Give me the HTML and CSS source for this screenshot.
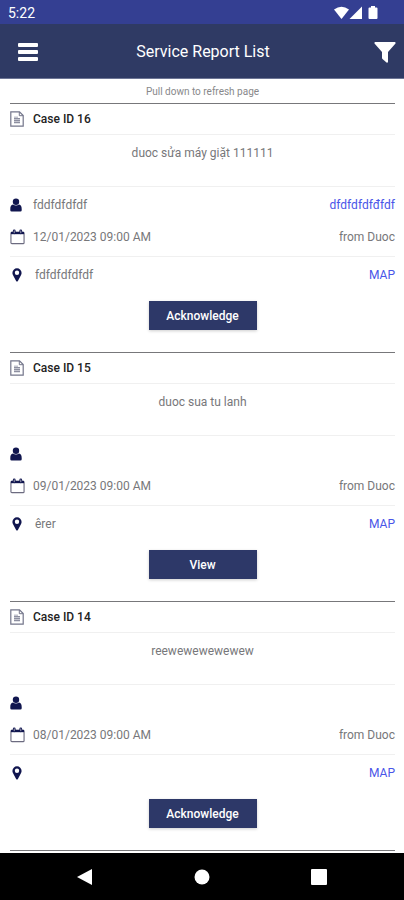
FILE: index.html
```html
<!DOCTYPE html>
<html lang="en">
<head>
<meta charset="utf-8">
<meta name="viewport" content="width=device-width, initial-scale=1">
<title>Service Report List</title>
<link rel="stylesheet" href="styles.css">
</head>
<body>
<svg class="sprite" aria-hidden="true">
  <symbol id="doc" viewBox="0 0 14 16"><path d="M.8.8h8.700l3.700 3.700v10.700H.8z" fill="#fff" stroke="#73758a" stroke-width="1.200"/><path d="M9.300 1v3.700H13" fill="none" stroke="#73758a"/><path d="M4 5.500h4v1.500h2v5.500H4z" fill="#c4c5cf"/><path d="M4 7.500h6M4 9.500h6M4 11.500h6" stroke="#8d8fa0"/></symbol>
  <symbol id="person" viewBox="0 0 12 14"><circle cx="6" cy="3.700" r="3.200"/><path d="M3 6.500C1 7 .3 8.500.3 11v1.200q0 1.300 1.300 1.300h8.800q1.300 0 1.300-1.300V11c0-2.500-.7-4-2.700-4.500q-3 2.200-6 0z"/></symbol>
  <symbol id="calendar" viewBox="0 0 16 16"><rect x="1" y="3" width="14" height="12" rx="1" fill="#fff" stroke="#6c6b80" stroke-width="1.200"/><path d="M1 2.500h14V5H1z"/><path d="M4.500 1.500v2M11.500 1.500v2" stroke="#11164f" stroke-width="3" stroke-linecap="round"/><path d="M4.500 1.500v2M11.500 1.500v2" stroke="#aaaabd" stroke-linecap="round"/></symbol>
  <symbol id="pin" viewBox="0 0 10 14"><path fill-rule="evenodd" d="M5 .3A4.600 4.600 0 0 0 .4 4.900c0 1 .3 1.700.8 2.600L4.100 13q.9 1 1.800 0l2.900-5.500c.5-.9.8-1.600.8-2.600A4.600 4.600 0 0 0 5 .3zm0 2.300a2.200 2.200 0 1 1 0 4.400 2.200 2.200 0 0 1 0-4.400z"/></symbol>
</svg>
<div class="status">
  <span>5:22</span>
  <svg width="46" height="14" viewBox="0 0 46 14" fill="#fff" aria-hidden="true"><path d="M0 3.500Q7.500-2 15 3.500L7.500 13z"/><path d="M28 .5V13H15.500z"/><path d="M37 0h4v1.500h1.500q1 0 1 1V12q0 1-1 1h-7q-1 0-1-1V2.500q0-1 1-1H37z"/></svg>
</div>
<header class="bar">
  <button class="icon-button" aria-label="Menu"><svg width="20" height="18" viewBox="0 0 20 18" fill="#fff"><rect y="0" width="20" height="4" rx="1"/><rect y="7" width="20" height="4" rx="1"/><rect y="14" width="20" height="4" rx="1"/></svg></button>
  <h1>Service Report List</h1>
  <button class="icon-button" aria-label="Filter"><svg width="22" height="21" viewBox="0 0 22 21" fill="#fff"><path d="M1 0h20q1 .5.500 1.500L14 10v10q-.5 1-1.500.5L8.500 17q-.5-.5-.5-1v-6L.5 1.500Q0 .5 1 0z"/></svg></button>
</header>
<main>
  <p class="hint">Pull down to refresh page</p>
  <article class="card">
    <h2><svg class="doc"><use href="#doc"/></svg>Case ID 16</h2>
    <p class="message">duoc sửa máy giặt 111111</p>
    <div class="details">
      <div class="row"><svg class="person"><use href="#person"/></svg><span>fddfdfdfdf</span><a href="#contact">dfdfdfdfđfdf</a></div>
      <div class="row"><svg class="calendar"><use href="#calendar"/></svg><span>12/01/2023 09:00 AM</span><span class="from">from Duoc</span></div>
    </div>
    <div class="row place"><svg class="pin"><use href="#pin"/></svg><span>fdfdfdfdfdf</span><a href="#map">MAP</a></div>
    <button class="action">Acknowledge</button>
  </article>
  <article class="card">
    <h2><svg class="doc"><use href="#doc"/></svg>Case ID 15</h2>
    <p class="message">duoc sua tu lanh</p>
    <div class="details">
      <div class="row"><svg class="person"><use href="#person"/></svg></div>
      <div class="row"><svg class="calendar"><use href="#calendar"/></svg><span>09/01/2023 09:00 AM</span><span class="from">from Duoc</span></div>
    </div>
    <div class="row place"><svg class="pin"><use href="#pin"/></svg><span>êrer</span><a href="#map">MAP</a></div>
    <button class="action">View</button>
  </article>
  <article class="card">
    <h2><svg class="doc"><use href="#doc"/></svg>Case ID 14</h2>
    <p class="message">reewewewewewew</p>
    <div class="details">
      <div class="row"><svg class="person"><use href="#person"/></svg></div>
      <div class="row"><svg class="calendar"><use href="#calendar"/></svg><span>08/01/2023 09:00 AM</span><span class="from">from Duoc</span></div>
    </div>
    <div class="row place"><svg class="pin"><use href="#pin"/></svg><a href="#map">MAP</a></div>
    <button class="action">Acknowledge</button>
  </article>
</main>
<nav class="system" aria-label="System">
  <button aria-label="Back"><svg width="16" height="16" viewBox="0 0 16 16"><path d="M15 0v16L0 8z"/></svg></button>
  <button aria-label="Home"><svg width="16" height="16" viewBox="0 0 16 16"><circle cx="8" cy="8" r="7.500"/></svg></button>
  <button aria-label="Recent apps"><svg width="16" height="16" viewBox="0 0 16 16"><rect width="16" height="16" rx="1"/></svg></button>
</nav>
</body>
</html>
```
FILE: styles.css
```css
* { box-sizing: border-box; }

body {
  margin: 0;
  min-height: 100vh;
  display: flex;
  flex-direction: column;
  background: #fff;
  color: #77777a;
  font: 12px/18px Roboto, sans-serif;
}

h1, h2, p { margin: 0; }
a { color: #4a55e8; text-decoration: none; }
button { border: 0; padding: 0; background: none; font: inherit; }
svg { display: block; flex: none; }
.sprite { position: absolute; width: 0; height: 0; }

.status {
  display: flex;
  justify-content: space-between;
  align-items: center;
  height: 24px;
  padding: 2px 24px 0 8px;
  background: #343f92;
  color: #fff;
  font-size: 14px;
}

.bar {
  display: flex;
  justify-content: space-between;
  align-items: center;
  height: 55px;
  padding: 2px 8px 0 18px;
  background: #2f3a64;
  border-bottom: 1px solid #6d7595;
  color: #fff;
}
.bar h1 {
  flex: 1;
  padding-right: 6px;
  text-align: center;
  font-size: 16px;
  line-height: 18px;
  font-weight: 400;
}
.icon-button { display: flex; }

main { flex: 1; padding: 0 9px 0 10px; }

.hint {
  height: 24px;
  line-height: 25px;
  text-align: center;
  font-size: 10px;
  color: #88888a;
}

.card {
  display: flex;
  flex-direction: column;
  height: 249px;
  border-top: 1px solid #77777a;
}
.card:last-child { border-bottom: 1px solid #77777a; height: 250px; }

.card h2 {
  display: flex;
  align-items: center;
  height: 31px;
  border-bottom: 1px solid #f0f0f0;
  color: #222;
  font-size: 12px;
  font-weight: 500;
}

.message {
  height: 52px;
  padding-top: 9px;
  border-bottom: 1px solid #f0f0f0;
  text-align: center;
}

.details { padding: 2px 0 3px; border-bottom: 1px solid #f0f0f0; }
.row { display: flex; align-items: center; height: 32px; }
.row a, .from { margin-left: auto; }
.place { height: 36px; }

.card svg { fill: #11164f; }
.doc { width: 14px; height: 16px; margin-right: 9px; }
.person { width: 12px; height: 14px; margin-right: 11px; }
.calendar { width: 15px; height: 16px; margin-right: 8px; }
.pin { width: 10px; height: 14px; margin: 0 13px 0 2px; }

.action {
  align-self: center;
  width: 108px;
  height: 29px;
  margin-top: 8px;
  background: #2d3868;
  box-shadow: 0 1px 3px #0003;
  color: #fff;
  font-weight: 500;
}

.system {
  display: flex;
  justify-content: space-around;
  align-items: center;
  height: 47px;
  padding: 0 26px;
  background: #000;
}
.system svg { fill: #fff; }
```
